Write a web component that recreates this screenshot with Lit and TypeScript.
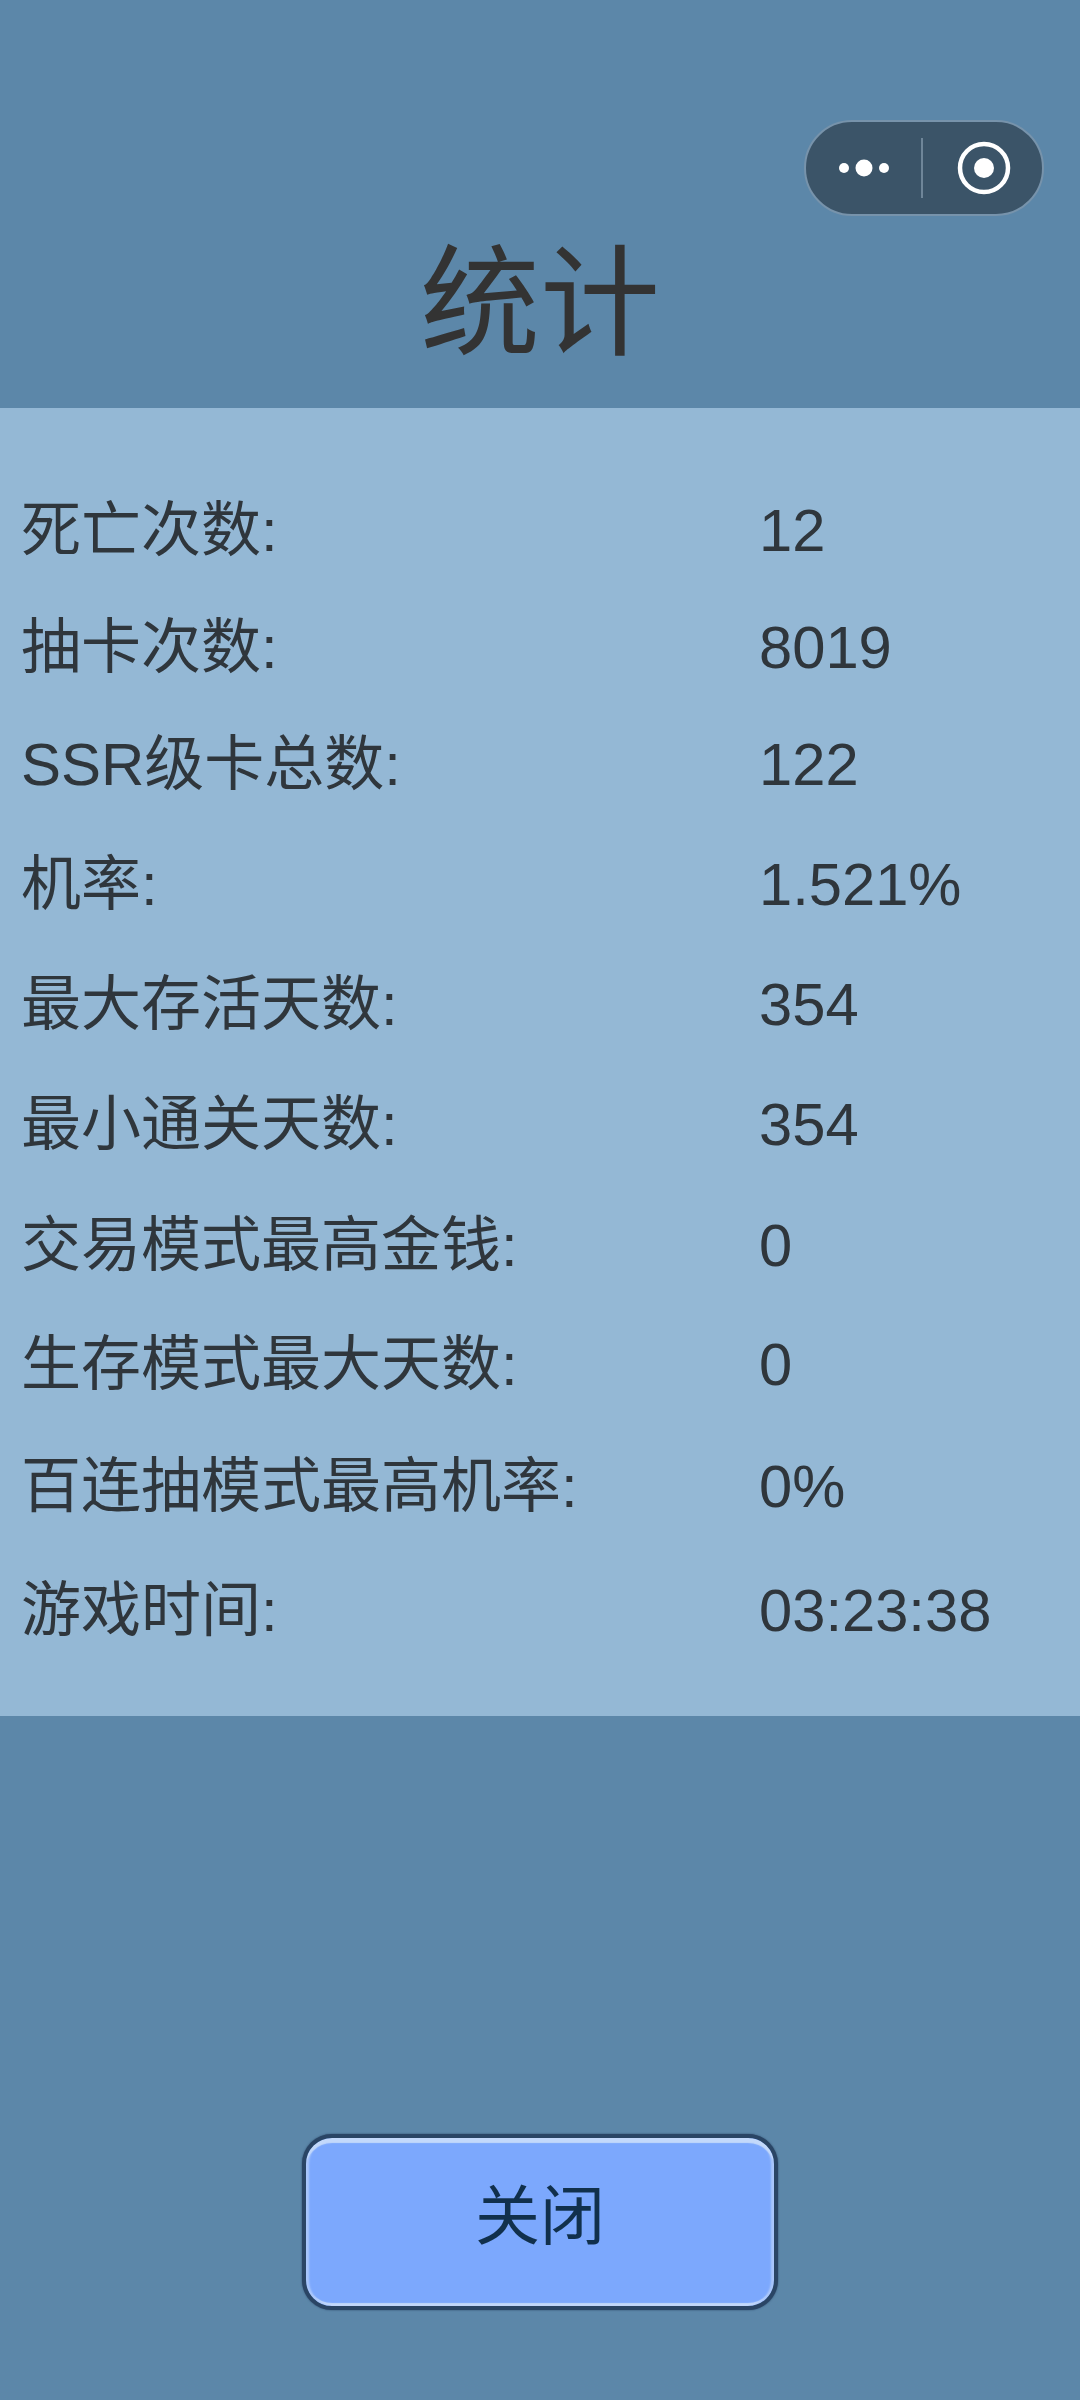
import { LitElement, html, css } from "lit";
import { customElement } from "lit/decorators.js";

const rows: [string, string, number][] = [
  ["死亡次数:", "12", 117],
  ["抽卡次数:", "8019", 117],
  ["SSR级卡总数:", "122", 120],
  ["机率:", "1.521%", 120],
  ["最大存活天数:", "354", 120],
  ["最小通关天数:", "354", 121],
  ["交易模式最高金钱:", "0", 119],
  ["生存模式最大天数:", "0", 122],
  ["百连抽模式最高机率:", "0%", 124],
  ["游戏时间:", "03:23:38", 70],
];

@customElement("app-root")
export class AppRoot extends LitElement {
  static styles = css`
    :host { display: block; width: 1080px; height: 2400px; background: #5c87a9; color: #333; font-family: "Liberation Sans", "Noto Sans CJK SC", sans-serif; overflow: hidden; position: relative; }
    .head { height: 408px; box-sizing: border-box; display: flex; justify-content: center; align-items: flex-end; padding-bottom: 34px; }
    .title { font-size: 120px; line-height: 140px; }
    .panel { height: 1308px; box-sizing: border-box; background: #94b8d5; padding: 88px 0 0 21px; }
    .row { display: grid; grid-template-columns: 738px 1fr; align-items: start; font-size: 60px; line-height: 70px; color: #2f363c; }
    .value { font-size: 59.7px; }
    .foot { display: flex; justify-content: center; padding-top: 418px; }
    .btn { width: 476px; height: 176px; box-sizing: border-box; border: 4px solid #2a4565; border-radius: 30px; background: #7ca8fd; box-shadow: inset 0 6px 1px -1px #c3d9fb, inset 4px 0 2px -1px #a9c6fb, inset -4px 0 2px -1px #a9c6fb, inset 0 -4px 1px -1px #c3d9fb, 0 0 2px #2a4565; display: flex; align-items: center; justify-content: center; padding-bottom: 10px; font-size: 65px; line-height: 70px; color: #11304c; }
    .capsule { position: absolute; left: 804px; top: 120px; width: 240px; height: 96px; box-sizing: border-box; border: 2px solid #7793ab; border-radius: 48px; background: #3b5468; }
    .capsule svg { display: block; }
  `;
  render() {
    return html`
      <div class="head"><div class="title">统计</div></div>
      <div class="panel">
        ${rows.map(([a, b, h]) => html`<div class="row" style="height:${h}px"><div>${a}</div><div class="value">${b}</div></div>`)}
      </div>
      <div class="foot"><div class="btn">关闭</div></div>
      <div class="capsule">
        <svg width="236" height="92" viewBox="0 0 236 92">
          <circle cx="38" cy="46" r="5" fill="#fff"/><circle cx="58" cy="46" r="8.5" fill="#fff"/><circle cx="78" cy="46" r="5" fill="#fff"/>
          <rect x="115" y="16" width="2" height="60" fill="#6f8699"/>
          <circle cx="178" cy="46" r="24" fill="none" stroke="#fff" stroke-width="4.5"/><circle cx="178" cy="46" r="10" fill="#fff"/>
        </svg>
      </div>
    `;
  }
}
